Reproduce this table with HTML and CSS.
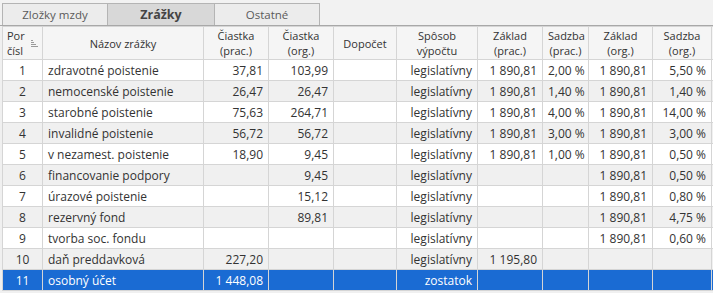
FILE: index.html
```html
<!DOCTYPE html>
<html lang="sk">
<head>
    <meta charset="utf-8">
    <title>Zrážky</title>
    <link rel="stylesheet" href="styles.css">
</head>
<body>
    <div class="tabs">
        <div class="tab">Zložky mzdy</div>
        <div class="tab active">Zrážky</div>
        <div class="tab">Ostatné</div>
    </div>
    <div class="grid-wrap">
        <table class="grid">
            <colgroup>
                <col style="width:40px">
                <col style="width:161px">
                <col style="width:65px">
                <col style="width:65px">
                <col style="width:63px">
                <col style="width:81px">
                <col style="width:65px">
                <col style="width:46px">
                <col style="width:64px">
                <col style="width:59px">
                <col style="width:40px">
            </colgroup>
            <thead>
                <tr>
                    <th class="sort">
                        <div class="sort-inner">
                            <span>Por<br>čísl</span>
                            <svg width="7" height="8" viewBox="0 0 7 8">
                                <path d="M0 0.5h2M0 2.5h3M0 4.5h5M0 6.5h7" stroke="#9a9a9a" stroke-width="1"/>
                            </svg>
                        </div>
                    </th>
                    <th>Názov zrážky</th>
                    <th>Čiastka<br>(prac.)</th>
                    <th>Čiastka<br>(org.)</th>
                    <th>Dopočet</th>
                    <th>Spôsob<br>výpočtu</th>
                    <th>Základ<br>(prac.)</th>
                    <th>Sadzba<br>(prac.)</th>
                    <th>Základ<br>(org.)</th>
                    <th>Sadzba<br>(org.)</th>
                    <th></th>
                </tr>
            </thead>
            <tbody>
                <tr>
                    <td class="c">1</td><td>zdravotné poistenie</td><td class="r">37,81</td><td class="r">103,99</td><td></td>
                    <td class="r">legislatívny</td><td class="r">1 890,81</td><td class="r">2,00 %</td><td class="r">1 890,81</td><td class="r">5,50 %</td><td></td>
                </tr>
                <tr>
                    <td class="c">2</td><td>nemocenské poistenie</td><td class="r">26,47</td><td class="r">26,47</td><td></td>
                    <td class="r">legislatívny</td><td class="r">1 890,81</td><td class="r">1,40 %</td><td class="r">1 890,81</td><td class="r">1,40 %</td><td></td>
                </tr>
                <tr>
                    <td class="c">3</td><td>starobné poistenie</td><td class="r">75,63</td><td class="r">264,71</td><td></td>
                    <td class="r">legislatívny</td><td class="r">1 890,81</td><td class="r">4,00 %</td><td class="r">1 890,81</td><td class="r">14,00 %</td><td></td>
                </tr>
                <tr>
                    <td class="c">4</td><td>invalidné poistenie</td><td class="r">56,72</td><td class="r">56,72</td><td></td>
                    <td class="r">legislatívny</td><td class="r">1 890,81</td><td class="r">3,00 %</td><td class="r">1 890,81</td><td class="r">3,00 %</td><td></td>
                </tr>
                <tr>
                    <td class="c">5</td><td>v nezamest. poistenie</td><td class="r">18,90</td><td class="r">9,45</td><td></td>
                    <td class="r">legislatívny</td><td class="r">1 890,81</td><td class="r">1,00 %</td><td class="r">1 890,81</td><td class="r">0,50 %</td><td></td>
                </tr>
                <tr>
                    <td class="c">6</td><td>financovanie podpory</td><td></td><td class="r">9,45</td><td></td>
                    <td class="r">legislatívny</td><td></td><td></td><td class="r">1 890,81</td><td class="r">0,50 %</td><td></td>
                </tr>
                <tr>
                    <td class="c">7</td><td>úrazové poistenie</td><td></td><td class="r">15,12</td><td></td>
                    <td class="r">legislatívny</td><td></td><td></td><td class="r">1 890,81</td><td class="r">0,80 %</td><td></td>
                </tr>
                <tr>
                    <td class="c">8</td><td>rezervný fond</td><td></td><td class="r">89,81</td><td></td>
                    <td class="r">legislatívny</td><td></td><td></td><td class="r">1 890,81</td><td class="r">4,75 %</td><td></td>
                </tr>
                <tr>
                    <td class="c">9</td><td>tvorba soc. fondu</td><td></td><td></td><td></td>
                    <td class="r">legislatívny</td><td></td><td></td><td class="r">1 890,81</td><td class="r">0,60 %</td><td></td>
                </tr>
                <tr>
                    <td class="c">10</td><td>daň preddavková</td><td class="r">227,20</td><td></td><td></td>
                    <td class="r">legislatívny</td><td class="r">1 195,80</td><td></td><td></td><td></td><td></td>
                </tr>
                <tr class="selected">
                    <td class="c">11</td><td>osobný účet</td><td class="r">1 448,08</td><td></td><td></td>
                    <td class="r">zostatok</td><td></td><td></td><td></td><td></td><td></td>
                </tr>
            </tbody>
        </table>
    </div>
</body>
</html>
```

FILE: styles.css
```css
html, body {
    margin: 0;
    overflow: hidden;
}

body {
    background-color: #f0f0f0;
    font-family: "Open Sans", "Noto Sans", sans-serif;
    font-size: 11px;
    color: #333333;
}

.tabs {
    display: flex;
    height: 22px;
    padding: 3px 0 0 2px;
    border-bottom: 1px solid #a8a8a8;
    background-color: #f2f2f2;
}

.tab {
    width: 104px;
    border: 1px solid #b4b4b4;
    border-bottom: none;
    margin-right: -1px;
    background-color: #ececec;
    color: #5a5a5a;
    font-size: 11.5px;
    text-align: center;
    line-height: 21px;
}

.tab.active {
    width: 106px;
    background-color: #d8d8d8;
    color: #444444;
    font-weight: bold;
    font-size: 12.5px;
}

.grid-wrap {
    padding-left: 2px;
}

.grid {
    table-layout: fixed;
    width: 749px;
    border-collapse: collapse;
    background-color: #ffffff;
}

.grid th,
.grid td {
    border: 1px solid #d5d5d5;
    padding: 0 5px;
    white-space: nowrap;
    overflow: hidden;
}

.grid th {
    height: 32px;
    background-color: #f5f5f5;
    font-weight: normal;
    font-size: 11px;
    line-height: 15px;
    color: #333333;
    text-align: center;
}

.grid th.sort {
    text-align: left;
    padding: 0 4px;
}

.sort-inner {
    display: flex;
    align-items: center;
    justify-content: space-between;
}

.sort-inner svg {
    margin-top: 2px;
}

.grid td {
    height: 20px;
    font-size: 12px;
}

.grid tbody tr:nth-child(even) td {
    background-color: #f0f0f0;
}

.grid td.c {
    text-align: center;
}

.grid td.r {
    text-align: right;
}

.grid tr.selected td {
    background-color: #1a6bd3;
    color: #ffffff;
}
```
